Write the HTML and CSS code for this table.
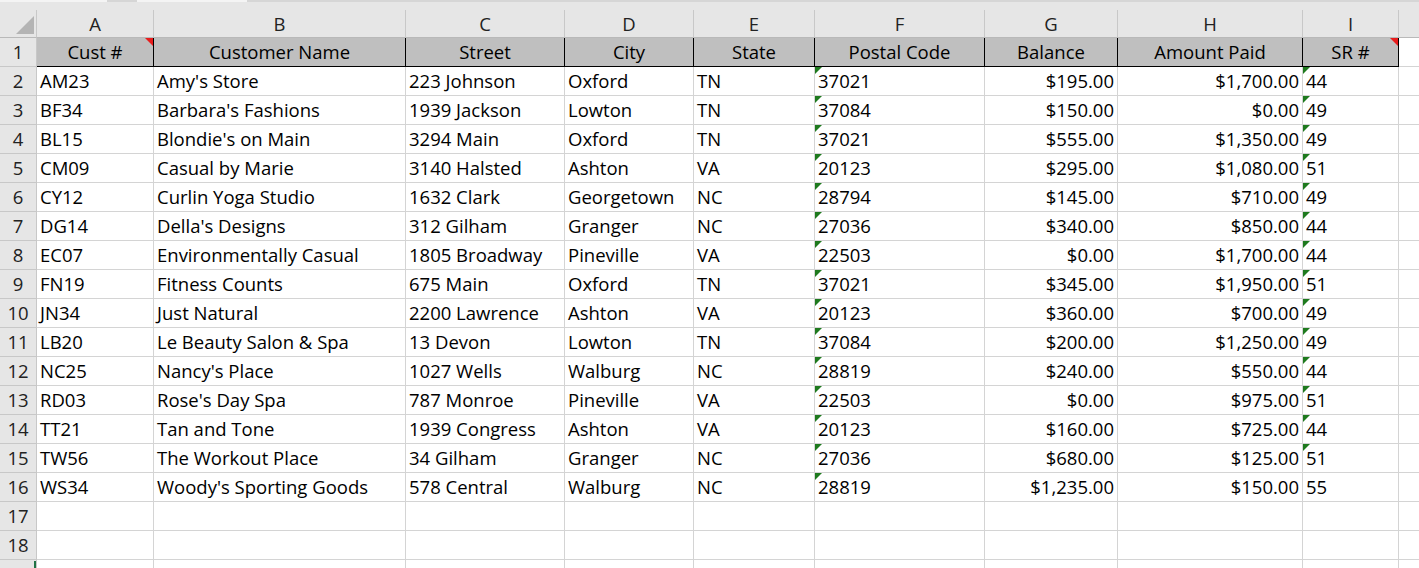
FILE: index.html
```html
<!DOCTYPE html>
<html>
<head>
<meta charset="utf-8">
<link rel="stylesheet" href="styles.css">
</head>
<body>
<div class="topstrip"><span class="seg w1"></span><span class="seg g1"></span><span class="seg w2"></span><span class="seg g2"></span></div>
<div class="gap"></div>
<div class="sheet">
  <div class="corner"><span class="corner-tri"></span></div>
  <div class="ch">A</div><div class="ch">B</div><div class="ch">C</div><div class="ch">D</div><div class="ch">E</div><div class="ch">F</div><div class="ch">G</div><div class="ch">H</div><div class="ch">I</div><div class="ch last"></div>

  <div class="rh">1</div><div class="c h1 note">Cust #</div><div class="c h1">Customer Name</div><div class="c h1">Street</div><div class="c h1">City</div><div class="c h1">State</div><div class="c h1">Postal Code</div><div class="c h1">Balance</div><div class="c h1">Amount Paid</div><div class="c h1 note">SR #</div><div class="c last"></div>

  <div class="rh">2</div><div class="c">AM23</div><div class="c">Amy's Store</div><div class="c">223 Johnson</div><div class="c">Oxford</div><div class="c">TN</div><div class="c t">37021</div><div class="c r">$195.00</div><div class="c r">$1,700.00</div><div class="c t">44</div><div class="c last"></div>
  <div class="rh">3</div><div class="c">BF34</div><div class="c">Barbara's Fashions</div><div class="c">1939 Jackson</div><div class="c">Lowton</div><div class="c">TN</div><div class="c t">37084</div><div class="c r">$150.00</div><div class="c r">$0.00</div><div class="c t">49</div><div class="c last"></div>
  <div class="rh">4</div><div class="c">BL15</div><div class="c">Blondie's on Main</div><div class="c">3294 Main</div><div class="c">Oxford</div><div class="c">TN</div><div class="c t">37021</div><div class="c r">$555.00</div><div class="c r">$1,350.00</div><div class="c t">49</div><div class="c last"></div>
  <div class="rh">5</div><div class="c">CM09</div><div class="c">Casual by Marie</div><div class="c">3140 Halsted</div><div class="c">Ashton</div><div class="c">VA</div><div class="c t">20123</div><div class="c r">$295.00</div><div class="c r">$1,080.00</div><div class="c t">51</div><div class="c last"></div>
  <div class="rh">6</div><div class="c">CY12</div><div class="c">Curlin Yoga Studio</div><div class="c">1632 Clark</div><div class="c">Georgetown</div><div class="c">NC</div><div class="c t">28794</div><div class="c r">$145.00</div><div class="c r">$710.00</div><div class="c t">49</div><div class="c last"></div>
  <div class="rh">7</div><div class="c">DG14</div><div class="c">Della's Designs</div><div class="c">312 Gilham</div><div class="c">Granger</div><div class="c">NC</div><div class="c t">27036</div><div class="c r">$340.00</div><div class="c r">$850.00</div><div class="c t">44</div><div class="c last"></div>
  <div class="rh">8</div><div class="c">EC07</div><div class="c">Environmentally Casual</div><div class="c">1805 Broadway</div><div class="c">Pineville</div><div class="c">VA</div><div class="c t">22503</div><div class="c r">$0.00</div><div class="c r">$1,700.00</div><div class="c t">44</div><div class="c last"></div>
  <div class="rh">9</div><div class="c">FN19</div><div class="c">Fitness Counts</div><div class="c">675 Main</div><div class="c">Oxford</div><div class="c">TN</div><div class="c t">37021</div><div class="c r">$345.00</div><div class="c r">$1,950.00</div><div class="c t">51</div><div class="c last"></div>
  <div class="rh">10</div><div class="c">JN34</div><div class="c">Just Natural</div><div class="c">2200 Lawrence</div><div class="c">Ashton</div><div class="c">VA</div><div class="c t">20123</div><div class="c r">$360.00</div><div class="c r">$700.00</div><div class="c t">49</div><div class="c last"></div>
  <div class="rh">11</div><div class="c">LB20</div><div class="c">Le Beauty Salon &amp; Spa</div><div class="c">13 Devon</div><div class="c">Lowton</div><div class="c">TN</div><div class="c t">37084</div><div class="c r">$200.00</div><div class="c r">$1,250.00</div><div class="c t">49</div><div class="c last"></div>
  <div class="rh">12</div><div class="c">NC25</div><div class="c">Nancy's Place</div><div class="c">1027 Wells</div><div class="c">Walburg</div><div class="c">NC</div><div class="c t">28819</div><div class="c r">$240.00</div><div class="c r">$550.00</div><div class="c t">44</div><div class="c last"></div>
  <div class="rh">13</div><div class="c">RD03</div><div class="c">Rose's Day Spa</div><div class="c">787 Monroe</div><div class="c">Pineville</div><div class="c">VA</div><div class="c t">22503</div><div class="c r">$0.00</div><div class="c r">$975.00</div><div class="c t">51</div><div class="c last"></div>
  <div class="rh">14</div><div class="c">TT21</div><div class="c">Tan and Tone</div><div class="c">1939 Congress</div><div class="c">Ashton</div><div class="c">VA</div><div class="c t">20123</div><div class="c r">$160.00</div><div class="c r">$725.00</div><div class="c t">44</div><div class="c last"></div>
  <div class="rh">15</div><div class="c">TW56</div><div class="c">The Workout Place</div><div class="c">34 Gilham</div><div class="c">Granger</div><div class="c">NC</div><div class="c t">27036</div><div class="c r">$680.00</div><div class="c r">$125.00</div><div class="c t">51</div><div class="c last"></div>
  <div class="rh">16</div><div class="c">WS34</div><div class="c">Woody's Sporting Goods</div><div class="c">578 Central</div><div class="c">Walburg</div><div class="c">NC</div><div class="c t">28819</div><div class="c r">$1,235.00</div><div class="c r">$150.00</div><div class="c">55</div><div class="c last"></div>
  <div class="rh">17</div><div class="c"></div><div class="c"></div><div class="c"></div><div class="c"></div><div class="c"></div><div class="c"></div><div class="c"></div><div class="c"></div><div class="c"></div><div class="c last"></div>
  <div class="rh">18</div><div class="c"></div><div class="c"></div><div class="c"></div><div class="c"></div><div class="c"></div><div class="c"></div><div class="c"></div><div class="c"></div><div class="c"></div><div class="c last"></div>
  <div class="rh sel"></div><div class="c"></div><div class="c"></div><div class="c"></div><div class="c"></div><div class="c"></div><div class="c"></div><div class="c"></div><div class="c"></div><div class="c"></div><div class="c last"></div>
</div>
</body>
</html>
```

FILE: styles.css
```css
html, body {
  margin: 0;
  padding: 0;
  background: #ffffff;
  overflow: hidden;
  width: 1419px;
  height: 568px;
}

body {
  font-family: "Open Sans", "Noto Sans", sans-serif;
  font-size: 18.5px;
  color: #000;
}

.topstrip {
  height: 2px;
  display: flex;
  background: #d6d6d6;
}
.seg { height: 2px; display: block; }
.w1 { width: 107px; background: #f4f4f4; }
.g1 { width: 30px; background: #d6d6d6; }
.w2 { width: 110px; background: #f4f4f4; }
.g2 { flex: 1; background: #d6d6d6; }

.gap {
  height: 8px;
  background: #e6e6e6;
}

.sheet {
  display: grid;
  grid-template-columns: 37px 117px 252px 159px 129px 121px 170px 133px 185px 96px 1fr;
  grid-template-rows: 28px;
  grid-auto-rows: 29px;
}

.sheet > div {
  box-sizing: border-box;
  position: relative;
  white-space: nowrap;
  overflow: hidden;
  line-height: 28px;
}

.corner {
  background: #e6e6e6;
  border-right: 1px solid #c8c8c8;
  border-bottom: 1px solid #b9b9b9;
}
.corner-tri {
  position: absolute;
  right: 2px;
  bottom: 3px;
  width: 0;
  height: 0;
  border-left: 18px solid transparent;
  border-bottom: 18px solid #b4b4b4;
}

.ch {
  background: #e6e6e6;
  border-right: 1px solid #c8c8c8;
  border-bottom: 1px solid #b9b9b9;
  text-align: center;
  color: #222;
  line-height: 27px !important;
}
.ch.last { border-right: none; }

.rh {
  background: #e6e6e6;
  border-right: 1px solid #c8c8c8;
  border-bottom: 1px solid #c8c8c8;
  text-align: center;
  color: #222;
}
.rh.sel::after {
  content: "";
  position: absolute;
  right: 0;
  top: 1px;
  width: 2px;
  height: 28px;
  background: #217346;
}

.c {
  padding: 0 3px;
  border-right: 1px solid #d4d4d4;
  border-bottom: 1px solid #d4d4d4;
}
.c.last { border-right: none; }
.c.r { text-align: right; }

.c.h1 {
  background: #bfbfbf;
  text-align: center;
  border-right: 1px solid #000;
  border-bottom: 1px solid #000;
}

.c.t::before {
  content: "";
  position: absolute;
  left: 0;
  top: 0;
  width: 0;
  height: 0;
  border-top: 7px solid #1e7a1e;
  border-right: 7px solid transparent;
}

.c.note::after {
  content: "";
  position: absolute;
  right: 0;
  top: 0;
  width: 0;
  height: 0;
  border-top: 8px solid #e81c1c;
  border-left: 8px solid transparent;
}
```
